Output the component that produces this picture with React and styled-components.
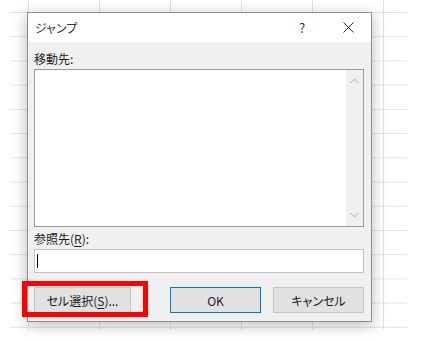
import React from 'react';
import styled, { createGlobalStyle } from 'styled-components';

const GlobalStyle = createGlobalStyle`
    html, body {
        margin: 0;
        padding: 0;
        background: #fff;
    }
    body {
        font-family: "Noto Sans CJK JP", "Noto Sans", sans-serif;
        font-size: 12px;
        font-feature-settings: "palt" 1;
        color: #1a1a1a;
    }
`

const Page = styled.div`
    position: relative;
    width: 422px;
    height: 341px;
    overflow: hidden;
`

const Sheet = styled.div`
    margin-left: 10px;
    width: 397px;
    height: 330px;
    box-sizing: border-box;
    padding: 12px 0 0 17px;
    background-image:
        linear-gradient(to right, #e2e2e2 1px, transparent 1px),
        linear-gradient(to bottom, #e2e2e2 1px, transparent 1px);
    background-size: 71px 100%, 100% 24.23px;
    background-position: 18px 0, 0 12px;
`

const Dialog = styled.div`
    width: 345px;
    box-sizing: border-box;
    border: 1px solid #8e8e8e;
    background: #f0f0f0;
    box-shadow: 0 3px 14px rgba(0, 0, 0, 0.28);
`

const TitleBar = styled.div`
    height: 29px;
    background: #fff;
    display: flex;
    align-items: center;
    padding-left: 7px;
`

const Title = styled.div`
    flex: 1;
    color: #333;
    font-size: 12px;
    padding-bottom: 1px;
`

const TitleButton = styled.div`
    width: ${(props) => props.width}px;
    display: flex;
    justify-content: center;
    align-items: center;
    color: #333;
    font-size: 13px;
`

const Body = styled.div`
    padding: 9px 7px 8px 6px;
    display: flex;
    flex-direction: column;
`

const Label = styled.div`
    height: 16px;
    line-height: 16px;
    margin-bottom: 2px;
    margin-top: ${(props) => props.top || 0}px;
    color: #1a1a1a;
    u {
        text-underline-offset: 2px;
    }
`

const ListBox = styled.div`
    height: 158px;
    box-sizing: border-box;
    border: 1px solid #9a9a9a;
    background: #fff;
    display: flex;
    justify-content: flex-end;
`

const ScrollBar = styled.div`
    width: 17px;
    background: #f0f0f0;
    display: flex;
    flex-direction: column;
    justify-content: space-between;
    align-items: center;
    padding: 8px 0;
`

const Input = styled.div`
    height: 24px;
    box-sizing: border-box;
    border: 1px solid #c3c3c3;
    background: #fff;
    display: flex;
    align-items: center;
    padding-left: 2px;
`

const Caret = styled.div`
    width: 1px;
    height: 14px;
    background: #000;
`

const ButtonRow = styled.div`
    margin-top: 14px;
    display: flex;
    justify-content: space-between;
`

const ButtonGroup = styled.div`
    display: flex;
    gap: 12px;
`

const Button = styled.div`
    width: ${(props) => props.width}px;
    height: 26px;
    box-sizing: border-box;
    border: 1px solid ${(props) => (props.primary ? '#0078d7' : '#c6c6c6')};
    background: #e1e1e1;
    display: flex;
    justify-content: center;
    align-items: center;
    color: #1a1a1a;
    font-size: 12px;
    u {
        text-underline-offset: 2px;
    }
`

const Highlight = styled.div`
    position: absolute;
    left: 22px;
    top: 281px;
    width: 126px;
    height: 36px;
    box-sizing: border-box;
    border: 5px solid #ff0000;
`

const Chevron = ({ up }) => (
    <svg width="9" height="6" viewBox="0 0 9 6">
        <path
            d={up ? 'M0.5 5.2 L4.5 1.2 L8.5 5.2' : 'M0.5 0.8 L4.5 4.8 L8.5 0.8'}
            fill="none"
            stroke="#c2c2c2"
            strokeWidth="1.2"
        />
    </svg>
)

const CloseIcon = () => (
    <svg width="11" height="11" viewBox="0 0 11 11">
        <path d="M0.5 0.5 L10.5 10.5 M10.5 0.5 L0.5 10.5" stroke="#333" strokeWidth="1" />
    </svg>
)

function App() {
    return (
        <Page>
            <GlobalStyle />
            <Sheet>
                <Dialog>
                    <TitleBar>
                        <Title>ジャンプ</Title>
                        <TitleButton width={46}>?</TitleButton>
                        <TitleButton width={46}>
                            <CloseIcon />
                        </TitleButton>
                    </TitleBar>
                    <Body>
                        <Label>移動先:</Label>
                        <ListBox>
                            <ScrollBar>
                                <Chevron up />
                                <Chevron />
                            </ScrollBar>
                        </ListBox>
                        <Label top={4}>参照先(<u>R</u>):</Label>
                        <Input>
                            <Caret />
                        </Input>
                        <ButtonRow>
                            <Button width={97}>セル選択(<u>S</u>)...</Button>
                            <ButtonGroup>
                                <Button width={91} primary>OK</Button>
                                <Button width={91}>キャンセル</Button>
                            </ButtonGroup>
                        </ButtonRow>
                    </Body>
                </Dialog>
            </Sheet>
            <Highlight />
        </Page>
    );
}

export default App;
